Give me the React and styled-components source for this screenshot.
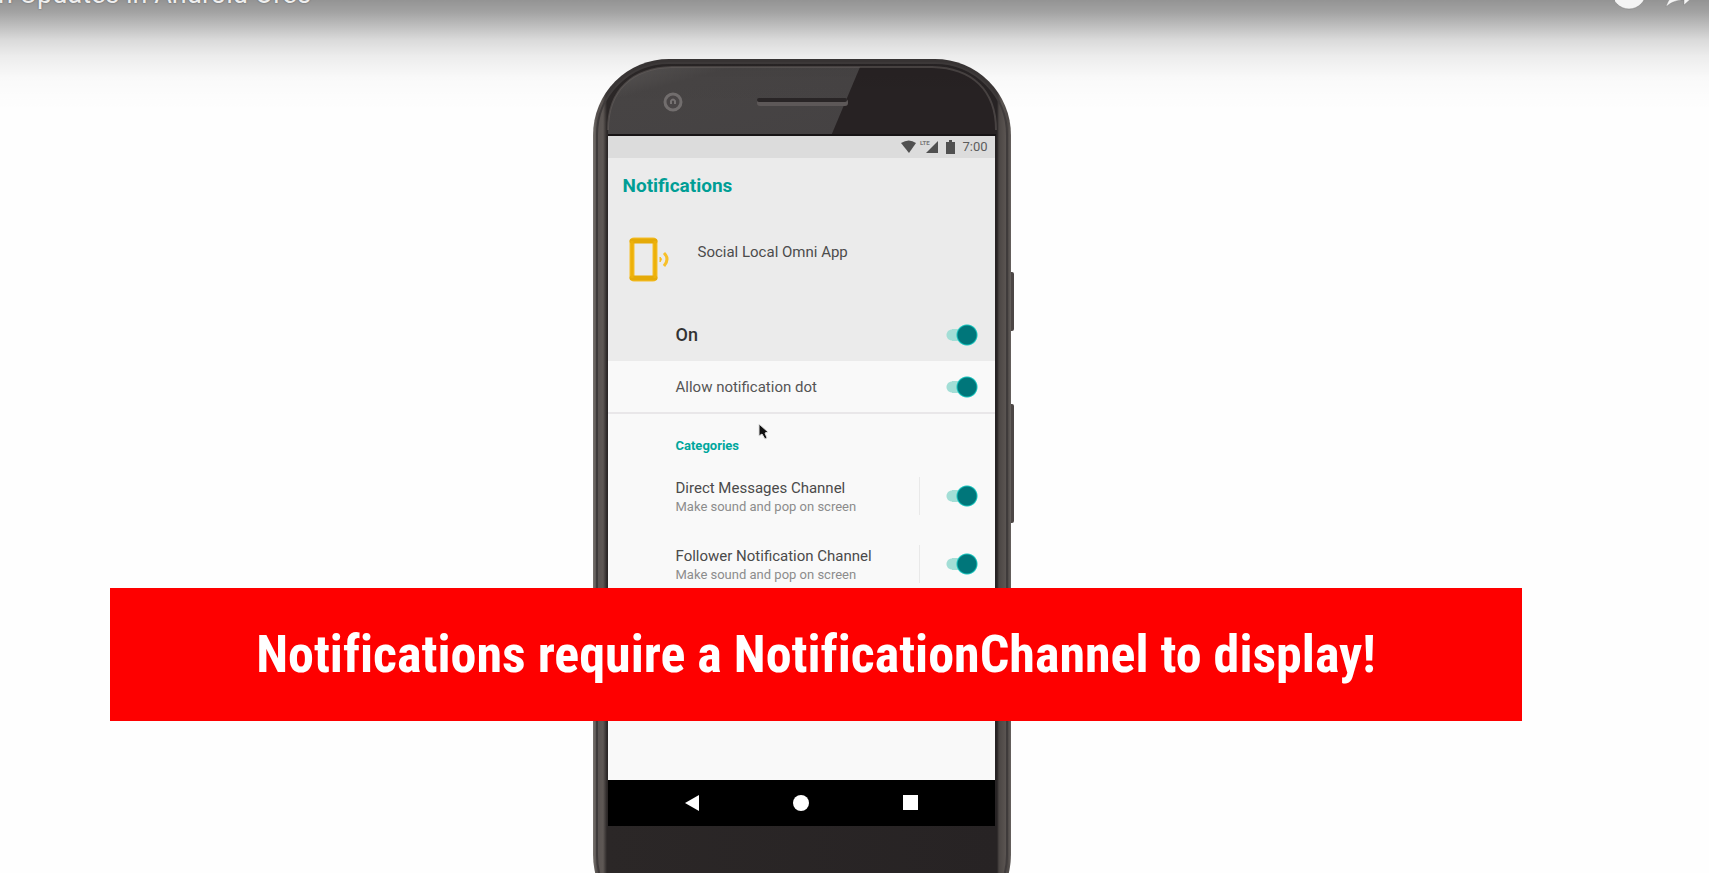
import React from "react";
import styled, { createGlobalStyle } from "styled-components";

const GlobalStyle = createGlobalStyle`
  *, *::before, *::after { box-sizing: border-box; }
  body {
    margin: 0;
    background: #fefefe;
    font-family: Roboto, "Liberation Sans", sans-serif;
  }
  h1, h2, h3, p { margin: 0; }
`;

const Player = styled.main`
  position: relative;
  height: 100vh;
  overflow: hidden;
  background: #fefefe;
`;

const TopBar = styled.header`
  position: absolute;
  inset: 0 0 auto;
  z-index: 3;
  display: flex;
  justify-content: space-between;
  align-items: flex-start;
  height: 110px;
  padding-right: 10px;
  background: linear-gradient(
    rgba(0, 0, 0, 0.42) 0,
    rgba(0, 0, 0, 0.36) 12px,
    rgba(0, 0, 0, 0.26) 25px,
    rgba(0, 0, 0, 0.14) 40px,
    rgba(0, 0, 0, 0.07) 56px,
    rgba(0, 0, 0, 0.02) 78px,
    rgba(0, 0, 0, 0) 110px
  );
`;

const VideoTitle = styled.h1`
  margin: -22px 0 0 -2px;
  color: #eee;
  font-size: 27px;
  font-weight: 400;
  line-height: 32px;
  white-space: nowrap;
  text-shadow: 0 0 2px rgba(0, 0, 0, 0.4);
`;

const Actions = styled.div`
  display: flex;
  gap: 12px;
`;

const ActionButton = styled.button`
  display: block;
  width: 36px;
  height: 12px;
  padding: 0;
  border: 0;
  background: none;
  svg { display: block; }
`;

const Stage = styled.div`
  display: flex;
  justify-content: center;
  padding: 59px 103px 0 0;
`;

const Phone = styled.section`
  display: flex;
  flex: none;
`;

const Body = styled.div`
  width: 418px;
  height: 872px;
  padding: 3px;
  border-radius: 76px;
  background: linear-gradient(90deg, #78736f 0, #534e4c 4px, #5d5754 9px, #3a3636 13px, #3a3636 404px, #5b5552 409px, #4d4846 415px, #67625f 418px);
`;

const Shell = styled.div`
  display: flex;
  flex-direction: column;
  height: 100%;
  overflow: hidden;
  border: 2px solid #3f3b3b;
  border-radius: 73px;
  background: linear-gradient(90deg, #5a5452 0, #5e5855 5px, #2b2727 9px, #272324 399px, #4b4644 401px, #5b5552 408px);
`;

const Bezel = styled.div`
  height: 72px;
  flex: none;
  svg { display: block; width: 100%; }
`;

const SideKeys = styled.div`
  display: flex;
  flex-direction: column;
  gap: 73px;
  width: 3px;
  padding-top: 213px;
`;

const SideKey = styled.span`
  height: ${(p) => p.$length}px;
  border-radius: 0 2px 2px 0;
  background: #4c4645;
`;

const Screen = styled.div`
  display: flex;
  flex-direction: column;
  flex: none;
  width: 387px;
  height: 690px;
  margin-left: 10px;
  background: #f9f9f9;
`;

const StatusBar = styled.div`
  display: flex;
  align-items: center;
  justify-content: flex-end;
  gap: 7px;
  height: 22px;
  padding-right: 7px;
  background: #dcdcdc;
  color: #5c5c5c;
  font-size: 13px;
  line-height: 16px;
  svg { display: block; }
`;

const Summary = styled.div`
  display: flex;
  flex-direction: column;
  height: 203px;
  padding: 16px 15px 0;
  background: #ebebeb;
`;

const ScreenTitle = styled.h2`
  color: #009e95;
  font-size: 19px;
  font-weight: 700;
  line-height: 24px;
`;

const AppRow = styled.div`
  display: flex;
  gap: 27px;
  height: 60px;
  margin-top: 38px;
  padding-left: 6px;
`;

const AppName = styled.p`
  padding-top: 6px;
  color: #4c4c4c;
  font-size: 15px;
  line-height: 20px;
`;

const SettingLabel = styled.label`
  display: flex;
  align-items: center;
  justify-content: space-between;
  height: 53px;
  padding: 0 17px 0 68px;
  border-bottom: ${(p) => (p.$ruled ? "2px solid #e9e7e9" : "0")};
  color: ${(p) => (p.$strong ? "#333" : "#555")};
  font-size: ${(p) => (p.$strong ? 18 : 15)}px;
  font-weight: ${(p) => (p.$strong ? 500 : 400)};
  line-height: 20px;
`;

const MasterRow = styled.div`
  margin: 14px -15px 0;
`;

const Toggle = styled.input`
  appearance: none;
  flex: none;
  width: 32px;
  height: 22px;
  margin: 0;
  background:
    radial-gradient(circle at 21px 11px, #00767a 9px, #19c4bd 10px, transparent 11px),
    linear-gradient(#a3ded6, #a3ded6) 6px 5px / 16px 12px no-repeat,
    radial-gradient(circle at 6px 11px, #a3ded6 5px, transparent 6px);
`;

const SectionTitle = styled.h3`
  padding: 22px 0 6px 68px;
  color: #00a79d;
  font-size: 13px;
  font-weight: 700;
  line-height: 20px;
`;

const Channel = styled.label`
  display: flex;
  align-items: center;
  height: 68px;
  padding-right: 17px;
`;

const ChannelText = styled.span`
  display: flex;
  flex: 1;
  flex-direction: column;
  height: 38px;
  padding: 1px 0 0 68px;
  margin-right: 26px;
  border-right: 1px solid #e9e9e9;
  white-space: nowrap;
`;

const ChannelName = styled.span`
  color: #4a4a4a;
  font-size: 15px;
  line-height: 20px;
`;

const ChannelNote = styled.span`
  color: #8c8c8c;
  font-size: 13px;
  line-height: 18px;
`;

const NavBar = styled.nav`
  display: flex;
  align-items: center;
  justify-content: center;
  gap: 85px;
  height: 46px;
  margin-top: auto;
  background: #000;
`;

const NavButton = styled.button`
  width: 24px;
  height: 24px;
  padding: 0;
  border: 0;
  background: none;
  svg { display: block; fill: #fff; }
`;

const Banner = styled.div`
  position: absolute;
  z-index: 2;
  top: 588px;
  left: 110px;
  right: 187px;
  display: flex;
  align-items: center;
  justify-content: center;
  height: 133px;
  background: #fe0000;
  color: #fff;
  font-family: "Roboto Condensed", "Liberation Sans Narrow", Roboto, sans-serif;
  font-size: 52px;
  font-weight: 700;
  font-variant-ligatures: none;
  line-height: 64px;
  white-space: nowrap;
`;

const Content = styled.div`
  position: relative;
`;

const Pointer = styled.svg`
  position: absolute;
  top: 9px;
  left: 150px;
`;

const channels = ["Direct Messages Channel", "Follower Notification Channel"];

export default function App() {
  return (
    <Player>
      <GlobalStyle />
      <TopBar>
        <VideoTitle>n Updates in Android Oreo</VideoTitle>
        <Actions>
          <ActionButton aria-label="Watch later">
            <svg width="36" height="12" viewBox="0 0 36 12">
              <circle cx="14" cy="-8" r="17" fill="#f4f4f4" stroke="#777" strokeOpacity=".5" />
            </svg>
          </ActionButton>
          <ActionButton aria-label="Share">
            <svg width="36" height="12" viewBox="0 0 36 12">
              <path d="M3 7C4 3 6 0 8-3H21V0C14 0 8 2 3 7ZM21 5V-3H30Z" fill="#f4f4f4" stroke="#777" strokeOpacity=".4" />
            </svg>
          </ActionButton>
        </Actions>
      </TopBar>

      <Stage>
        <Phone>
          <Body>
            <Shell>
              <Bezel>
                <svg height="72" viewBox="0 0 408 72">
                  <defs>
                    <linearGradient id="glass" x1="0" x2="1" y1="0" y2="1">
                      <stop offset="0" stopColor="#5a5756" />
                      <stop offset=".25" stopColor="#474444" />
                      <stop offset="1" stopColor="#454243" />
                    </linearGradient>
                  </defs>
                  <path d="M10 72V66C10 26 34 4 74 3H334C374 4 398 26 398 66V72Z" fill="#272223" />
                  <path d="M10 72V66C10 26 34 4 74 3H262L233 72Z" fill="url(#glass)" />
                  <path d="M10 66C10 26 34 4 74 3H334C374 4 398 26 398 66" fill="none" stroke="#6a6462" strokeOpacity=".5" strokeWidth="2" />
                  <circle cx="75" cy="38" r="8" fill="#4a4647" stroke="#726e6e" strokeWidth="3" />
                  <path d="M73 40V37Q75 34 77 37V40" fill="none" stroke="#777373" strokeWidth="2" />
                  <rect x="159" y="35" width="91" height="7" rx="3" fill="#5d5858" />
                  <rect x="159" y="34" width="90" height="4" rx="2" fill="#292526" />
                  <path d="M10 70H398V72H10Z" fill="#171415" />
                </svg>
              </Bezel>
              <Screen>
                <StatusBar>
                  <svg width="38" height="16" viewBox="0 0 38 16" fill="#505050">
                    <path d="M0 4Q8-1 15 4L8 14Z" />
                    <path d="M37 2V14H25Z" />
                    <text x="19" y="6" fontSize="6" fontWeight="700" fill="#777">LTE</text>
                  </svg>
                  <svg width="9" height="16" viewBox="0 0 9 16" fill="#505050">
                    <path d="M3 1H6V3H9V15H0V3H3Z" />
                  </svg>
                  <span>7:00</span>
                </StatusBar>
                <Summary>
                  <ScreenTitle>Notifications</ScreenTitle>
                  <AppRow>
                    <svg width="42" height="50" viewBox="0 0 42 50" fill="none" stroke="#f7c02a">
                      <rect x="3" y="4" width="23" height="39" rx="2" strokeWidth="5" />
                      <path d="M3 5H26M3 42H26" strokeWidth="5" strokeLinecap="round" stroke="#e5aa08" />
                      <path d="M3 5V42M26 5V42" strokeWidth="3" stroke="#edb10a" />
                      <path d="M35 17Q41 23 35 30" strokeWidth="3" />
                      <path d="M31 21Q34 23 31 26Z" strokeWidth="1" fill="#f5b90c" />
                    </svg>
                    <AppName>Social Local Omni App</AppName>
                  </AppRow>
                  <MasterRow>
                    <SettingLabel $strong>
                      On
                      <Toggle type="checkbox" defaultChecked />
                    </SettingLabel>
                  </MasterRow>
                </Summary>
                <SettingLabel $ruled>
                  Allow notification dot
                  <Toggle type="checkbox" defaultChecked />
                </SettingLabel>
                <Content>
                  <Pointer width="12" height="18" viewBox="0 0 12 18">
                    <path d="M1 1V13L4 11L7 16L9 15L7 10L10 9Z" fill="#111" stroke="#ddd" />
                  </Pointer>
                  <SectionTitle>Categories</SectionTitle>
                  {channels.map((name) => (
                    <Channel key={name}>
                      <ChannelText>
                        <ChannelName>{name}</ChannelName>
                        <ChannelNote>Make sound and pop on screen</ChannelNote>
                      </ChannelText>
                      <Toggle type="checkbox" defaultChecked />
                    </Channel>
                  ))}
                </Content>
                <NavBar>
                  <NavButton aria-label="Back">
                    <svg width="24" height="24"><path d="M5 12L19 4V20Z" /></svg>
                  </NavButton>
                  <NavButton aria-label="Home">
                    <svg width="24" height="24"><circle cx="12" cy="12" r="8" /></svg>
                  </NavButton>
                  <NavButton aria-label="Recent apps">
                    <svg width="24" height="24"><path d="M5 4H20V19H5Z" /></svg>
                  </NavButton>
                </NavBar>
              </Screen>
            </Shell>
          </Body>
          <SideKeys>
            <SideKey $length={59} />
            <SideKey $length={119} />
          </SideKeys>
        </Phone>
      </Stage>

      <Banner>Notifications require a NotificationChannel to display!</Banner>
    </Player>
  );
}
